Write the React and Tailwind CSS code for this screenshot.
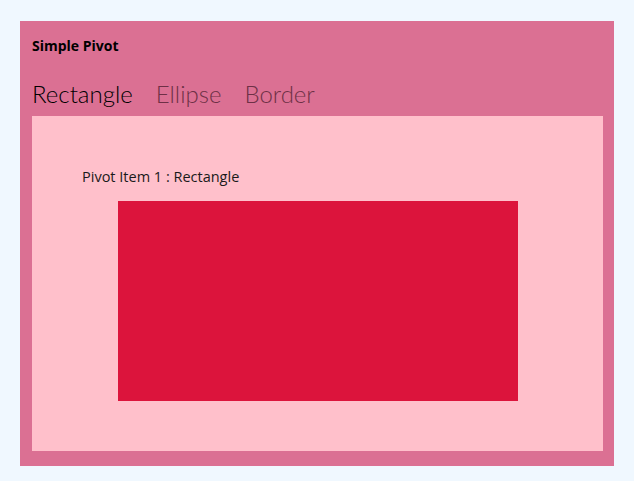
export default function App() {
  const tabs = ["Rectangle", "Ellipse", "Border"];

  return (
    <div className="min-h-screen w-full bg-[#f0f8ff] pt-[21px] pl-[20px] font-['Open_Sans',sans-serif]">
      <div className="flex h-[445px] w-[594px] flex-col bg-[#db7093] pb-[15px] pl-[12px] pr-[11px]">
        {/* header */}
        <div className="pt-[15px] text-[14px] font-bold leading-[20px] text-black">
          Simple Pivot
        </div>
        <div className="mt-[20px] flex h-[40px] items-start gap-[23px] font-['Lato',sans-serif]">
          {tabs.map((t, i) => (
            <span
              key={t}
              className={
                "text-[24px] font-light leading-[36px] " +
                (i === 0 ? "text-black" : "text-[#6e3046]")
              }
            >
              {t}
            </span>
          ))}
        </div>

        {/* pivot content */}
        <div className="flex flex-1 flex-col bg-[#ffc0cb] px-[50px] pt-[51px]">
          <div className="text-[14.5px] leading-[20px] text-[#1a1a1a]">Pivot Item 1 : Rectangle</div>
          <div className="mt-[14px] flex justify-center">
            <div className="h-[200px] w-[400px] bg-[#dc143c]" />
          </div>
        </div>
      </div>
    </div>
  );
}
